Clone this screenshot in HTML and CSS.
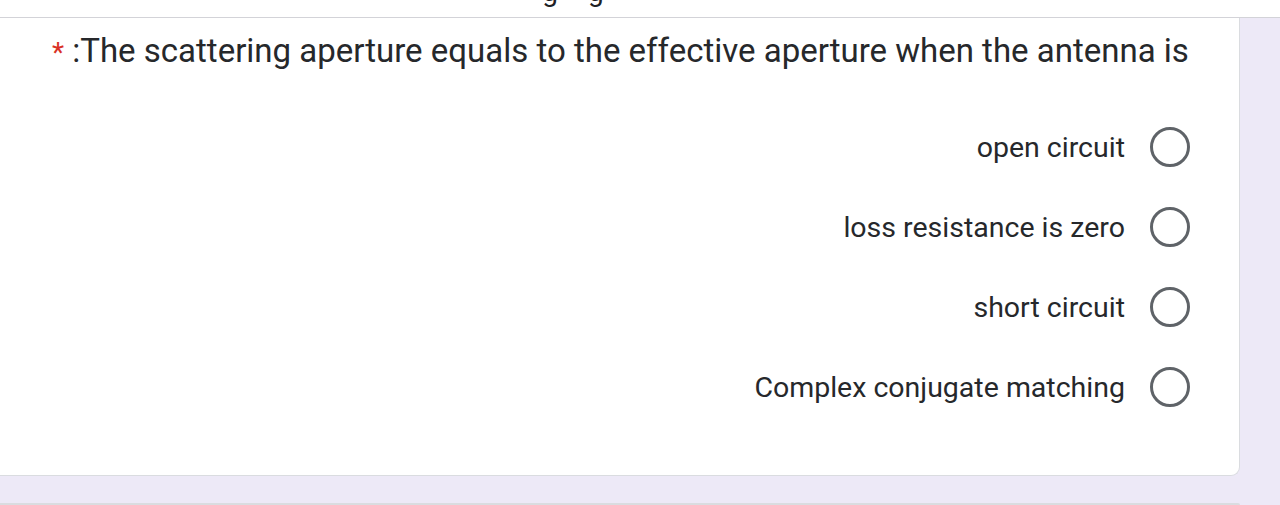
FILE: index.html
```html
<!DOCTYPE html>
<html>
<head>
<meta charset="utf-8">
<link rel="stylesheet" href="styles.css">
</head>
<body>
<div class="topbar"><div class="topbar-text">g<span class="gap"></span>g</div></div>
<main class="page">
  <section class="card">
    <h2 class="question"><span class="req">*</span> :The scattering aperture equals to the effective aperture when the antenna is</h2>
    <div class="options">
      <label class="option"><span class="label">open circuit</span><span class="radio"></span></label>
      <label class="option"><span class="label">loss resistance is zero</span><span class="radio"></span></label>
      <label class="option"><span class="label">short circuit</span><span class="radio"></span></label>
      <label class="option"><span class="label">Complex conjugate matching</span><span class="radio"></span></label>
    </div>
  </section>
  <section class="card next"></section>
</main>
</body>
</html>
```
FILE: styles.css
```css
* { box-sizing: border-box; }
html, body { margin: 0; padding: 0; }
body {
  width: 1280px;
  height: 505px;
  overflow: hidden;
  background: #ede9f7;
  font-family: Roboto, "Noto Sans", sans-serif;
  color: #202124;
}
.topbar {
  height: 18px;
  background: #ffffff;
  border-bottom: 1px solid #d3d3d8;
  overflow: hidden;
  display: flex;
  justify-content: center;
  padding-right: 134px;
}
.topbar-text {
  font-size: 28px;
  line-height: 28px;
  margin-top: -22px;
  color: #202124;
  display: flex;
}
.gap { display: inline-block; width: 30px; }
.page {
  display: flex;
  flex-direction: column;
  gap: 27px;
}
.card {
  background: #ffffff;
  width: 1250px;
  margin-left: -10px;
  border: 1px solid #dadce0;
  border-top: none;
  border-radius: 0 0 9px 0;
  height: 458px;
  padding: 13px 49px 0 61px;
}
.card.next {
  border-top: 1px solid #dadce0;
  border-radius: 0 9px 0 0;
  height: 2px;
  padding: 0;
}
.question {
  margin: 0;
  font-weight: 400;
  font-size: 33px;
  line-height: 40px;
  color: #26282b;
  letter-spacing: 0;
  white-space: nowrap;
}
.req { color: #d93025; font-size: 28px; }
.options {
  margin-top: 54px;
  display: flex;
  flex-direction: column;
  align-items: flex-end;
  gap: 40px;
}
.option {
  display: flex;
  align-items: center;
  gap: 25px;
  height: 40px;
}
.label {
  font-size: 28.5px;
  color: #26282b;
}
.radio {
  width: 40px;
  height: 40px;
  border: 3px solid #5f6368;
  border-radius: 50%;
}
```
